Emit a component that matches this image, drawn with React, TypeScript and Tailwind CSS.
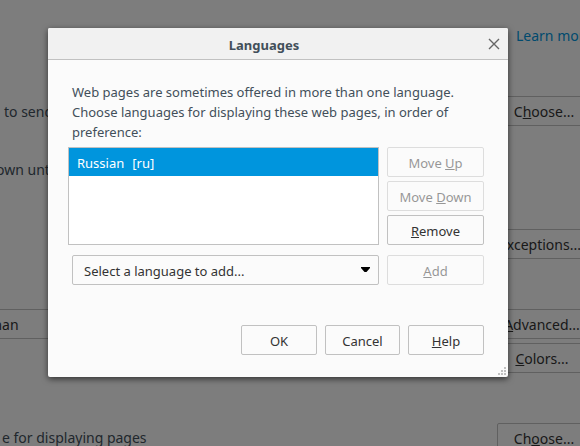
import { ReactNode } from "react";

const languages = [{ name: "Russian", code: "ru" }];

const pageButton =
  "h-[30px] shrink-0 rounded-xs border border-[#c1c1c1] bg-[#fbfbfb] pt-px text-center whitespace-nowrap text-[#333]";

function DialogButton({
  children,
  className = "",
  disabled = false,
}: {
  children: ReactNode;
  className?: string;
  disabled?: boolean;
}) {
  return (
    <button
      type="button"
      disabled={disabled}
      className={
        "h-[30px] rounded-xs border border-[#c1c1c1] bg-[#fbfbfb] pt-0.5 text-center whitespace-nowrap text-[#333] disabled:opacity-50 " +
        className
      }
    >
      {children}
    </button>
  );
}

function Preferences() {
  return (
    <main className="flex min-h-screen justify-between overflow-hidden bg-[#fbfbfb] text-[14px] leading-5 text-[#424f5a]">
      <div className="flex flex-col pt-[102px] whitespace-nowrap">
        <p className="pl-1">to send</p>
        <p className="-ml-1 pt-[38px]">own unt</p>
        <button
          type="button"
          className="mt-[129px] -ml-3 h-[30px] w-40 border border-[#c1c1c1] bg-[#fbfbfb] pt-0.5 text-left text-[#333]"
        >
          man
        </button>
        <p className="pt-[89px] pl-0.5">e for displaying pages</p>
      </div>
      <div className="-mr-[11px] flex w-[94px] flex-col pt-[26px]">
        <a href="#learn" className="pl-[19px] whitespace-nowrap text-[#0095dd]">
          Learn more
        </a>
        <button type="button" className={pageButton + " mt-[50px]"}>
          C<u>h</u>oose...
        </button>
        <button type="button" className={pageButton + " mt-[103px] -ml-2"}>
          <u>E</u>xceptions...
        </button>
        <button type="button" className={pageButton + " mt-[50px] -ml-1"}>
          <u>A</u>dvanced...
        </button>
        <button type="button" className={pageButton + " mt-1 -ml-1"}>
          <u>C</u>olors...
        </button>
        <button type="button" className={pageButton + " mt-[50px]"}>
          Ch<u>o</u>ose...
        </button>
      </div>
    </main>
  );
}

function LanguagesDialog() {
  return (
    <div
      role="dialog"
      aria-labelledby="dialog-title"
      className="relative w-full rounded-xs bg-[#fbfbfb] text-[13px] leading-5 text-[#424f5a] shadow-[0_2px_6px_rgba(0,0,0,0.6)]"
    >
      <header className="flex h-8 items-center rounded-t-xs border-b border-[#c1c1c1] bg-[#f1f1f1] pr-2">
        <h1 id="dialog-title" className="flex-1 pt-0.5 pr-2 text-center font-bold">
          Languages
        </h1>
        <button
          type="button"
          aria-label="Close"
          className="flex h-5 w-3 items-center justify-center text-[#666]"
        >
          <svg width="12" height="12" viewBox="0 0 12 12" className="shrink-0">
            <path
              d="M1 1l10 10M11 1L1 11"
              stroke="currentColor"
              strokeWidth="1.4"
              fill="none"
            />
          </svg>
        </button>
      </header>

      <div className="px-6 pt-[22px] pb-[22px]">
        <p>
          Web pages are sometimes offered in more than one language. Choose
          languages for displaying these web pages, in order of preference:
        </p>

        <div className="mt-[5px] flex gap-2">
          <ul
            role="listbox"
            aria-label="Languages in order of preference"
            className="-ml-1 flex-1 border border-[#c1c1c1] bg-white"
          >
            {languages.map((language) => (
              <li
                key={language.code}
                role="option"
                aria-selected="true"
                className="flex h-7 items-center gap-2 bg-[#0095dd] px-2 pt-0.5 text-white"
              >
                <span>{language.name}</span>
                <span>[{language.code}]</span>
              </li>
            ))}
          </ul>
          <div className="flex w-[97px] flex-col gap-1">
            <DialogButton disabled>
              Move <u>U</u>p
            </DialogButton>
            <DialogButton disabled>
              Move <u>D</u>own
            </DialogButton>
            <DialogButton>
              <u>R</u>emove
            </DialogButton>
          </div>
        </div>

        <div className="mt-[10px] flex gap-2">
          <div className="relative flex-1">
            <select
              aria-label="Select a language to add"
              className="h-[30px] w-full appearance-none rounded-xs border border-[#c1c1c1] bg-[#fbfbfb] px-[11px] pt-0.5 text-[#333]"
            >
              <option>Select a language to add...</option>
            </select>
            <svg
              width="9"
              height="5"
              viewBox="0 0 9 5"
              className="pointer-events-none absolute top-3 right-[9px]"
            >
              <path d="M0 0h9v1L5.5 5h-2L0 1z" fill="#000" />
            </svg>
          </div>
          <DialogButton disabled className="w-[97px]">
            <u>A</u>dd
          </DialogButton>
        </div>

        <div className="mt-10 flex justify-end gap-2">
          <DialogButton className="w-[76px]">OK</DialogButton>
          <DialogButton className="w-[75px]">Cancel</DialogButton>
          <DialogButton className="w-[76px]">
            <u>H</u>elp
          </DialogButton>
        </div>
      </div>

      <svg
        width="8"
        height="8"
        viewBox="0 0 8 8"
        className="absolute right-0.5 bottom-0.5"
        fill="#c1c1c1"
      >
        <path d="M6 0h2v2H6zM3 3h2v2H3zM6 3h2v2H6zM0 6h2v2H0zM3 6h2v2H3zM6 6h2v2H6z" />
      </svg>
    </div>
  );
}

export default function App() {
  return (
    <div className="relative h-screen overflow-hidden font-['Noto_Sans',sans-serif]">
      <Preferences />
      <div className="absolute inset-0 flex items-start bg-black/50 pt-7 pr-[72px] pl-12">
        <LanguagesDialog />
      </div>
    </div>
  );
}
